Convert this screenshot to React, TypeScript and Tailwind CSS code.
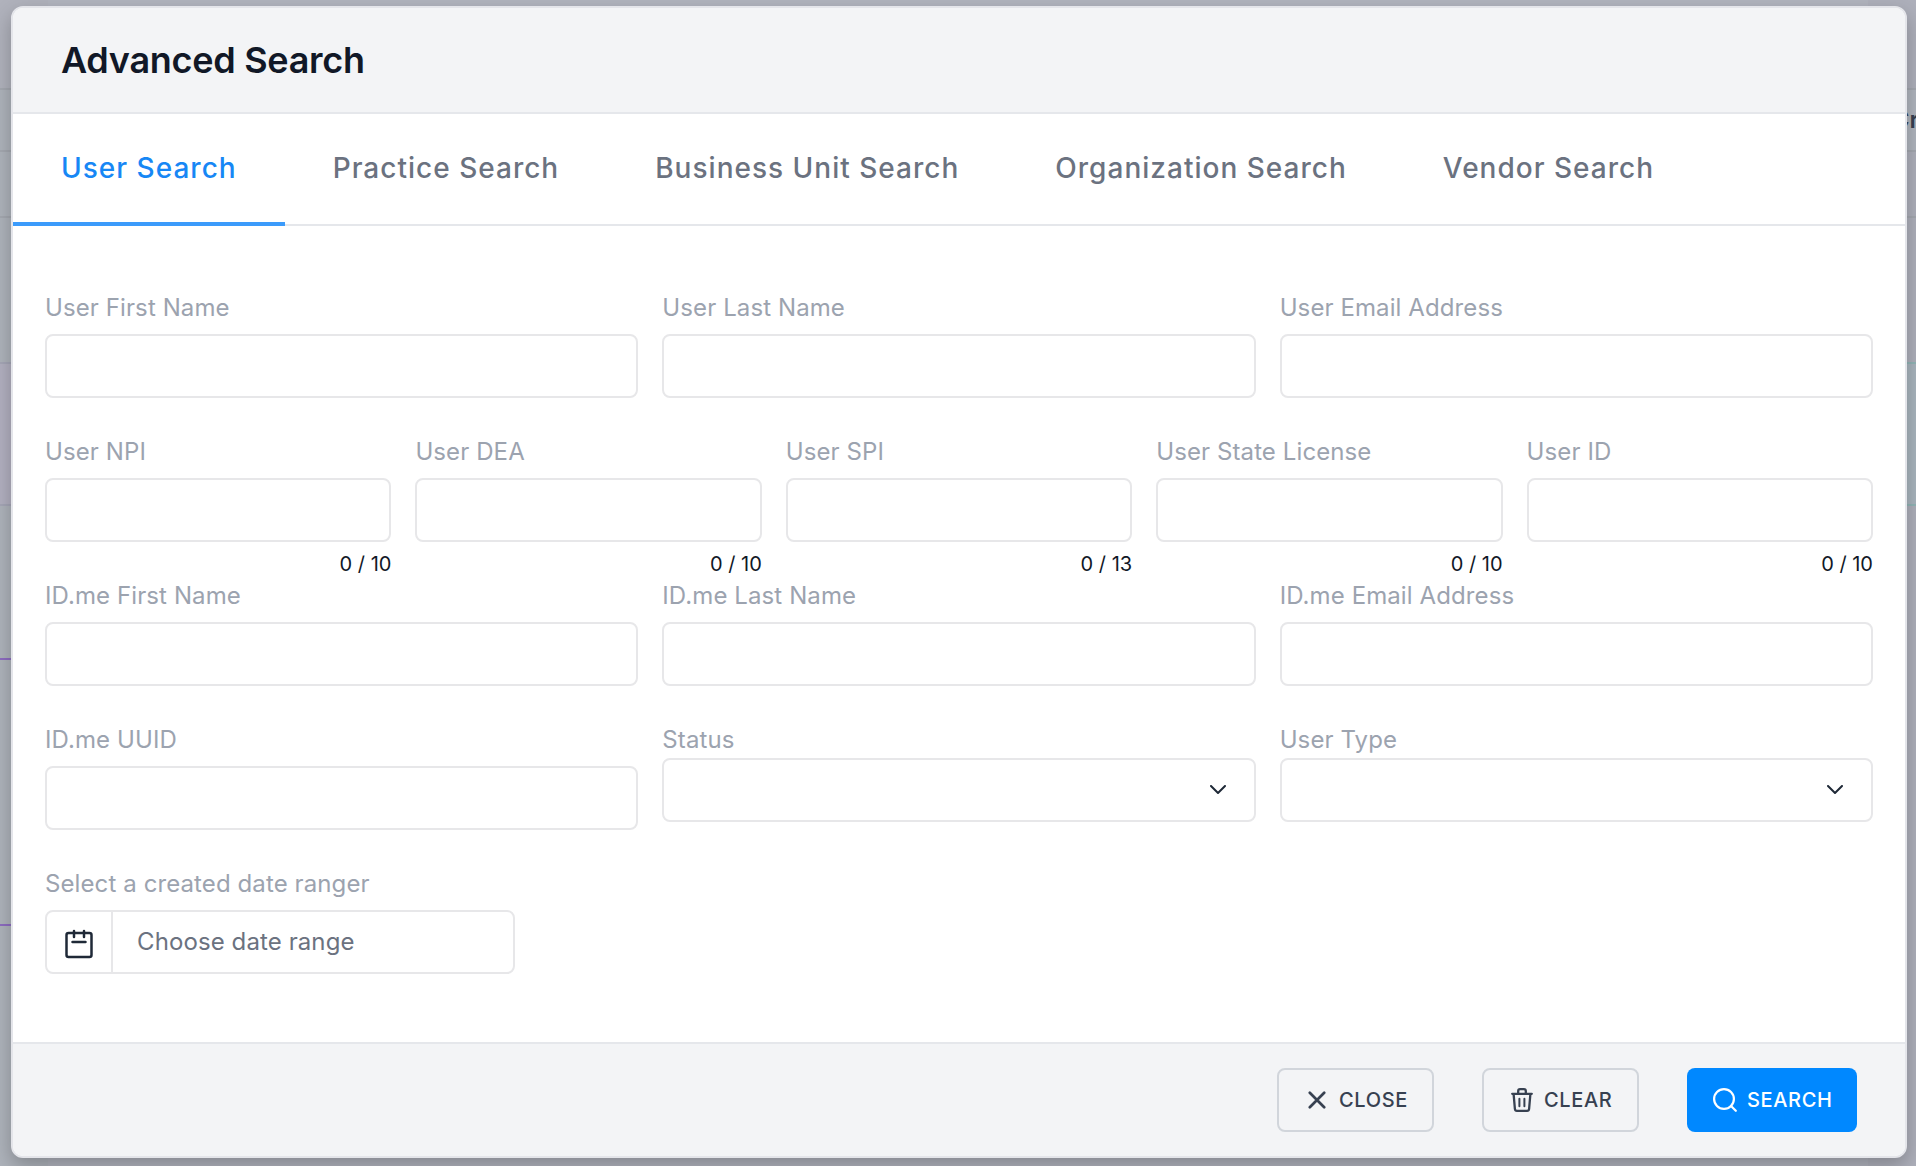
import React, { useState } from 'react';

const tabs = [
  'User Search',
  'Practice Search',
  'Business Unit Search',
  'Organization Search',
  'Vendor Search',
];

const box = 'h-16 w-full rounded-lg border-2 border-[#e7e7e9] bg-white';

interface FieldProps {
  label: string;
  max?: number;
}

function Field({ label, max }: FieldProps) {
  const [value, setValue] = useState('');

  return (
    <label className="flex h-36 flex-col">
      <span className="h-[42px] text-[24px] leading-8 tracking-[0.1px] text-[#9ca3af]">{label}</span>
      <input
        className={`${box} px-6 outline-none`}
        value={value}
        maxLength={max}
        onChange={(e) => setValue(e.target.value)}
      />
      {max && (
        <span className="mt-2 text-right text-[20px] leading-7 text-[#111827]">
          {value.length} / {max}
        </span>
      )}
    </label>
  );
}

function SelectField({ label }: FieldProps) {
  return (
    <div className="flex h-36 flex-col">
      <span className="h-[34px] text-[24px] leading-8 tracking-[0.1px] text-[#9ca3af]">{label}</span>
      <button className={`${box} flex items-center justify-end pr-7`}>
        <svg width="16" height="10" viewBox="0 0 16 10" fill="none" stroke="#1f2937" strokeWidth="2">
          <path d="M1 1l7 7 7-7" strokeLinecap="round" strokeLinejoin="round" />
        </svg>
      </button>
    </div>
  );
}

function CalendarIcon() {
  return (
    <svg width="28" height="30" viewBox="0 0 28 30" fill="none" stroke="#1f2937" strokeWidth="2.5" strokeLinecap="round">
      <rect x="1.5" y="4" width="25" height="24" rx="2" />
      <path d="M9 2v6M19 2v6M7.5 13h13" />
    </svg>
  );
}

function CloseIcon() {
  return (
    <svg width="18" height="18" viewBox="0 0 18 18" fill="none" stroke="currentColor" strokeWidth="2.7" strokeLinecap="round">
      <path d="M1.8 1.8l14.4 14.4M16.2 1.8L1.8 16.2" />
    </svg>
  );
}

function TrashIcon() {
  return (
    <svg width="22" height="24" viewBox="0 0 22 24" fill="none" stroke="currentColor" strokeWidth="2.3" strokeLinecap="round" strokeLinejoin="round">
      <path d="M1.2 5.8h19.6M7.2 5.8V3a1.8 1.8 0 0 1 1.8-1.8h4A1.8 1.8 0 0 1 14.8 3v2.8M2.6 5.8l1.3 15.2a2 2 0 0 0 2 1.8h10.2a2 2 0 0 0 2-1.8l1.3-15.2" />
      <path d="M8.4 10.8v7.4M13.4 10.8v7.4" strokeWidth="2" />
    </svg>
  );
}

function SearchIcon() {
  return (
    <svg width="24" height="24" viewBox="0 0 24 24" fill="none" stroke="currentColor" strokeWidth="2.2" strokeLinecap="round">
      <circle cx="11" cy="11" r="9.9" />
      <path d="M18 18l4.8 4.8" />
    </svg>
  );
}

// Slice of the dimmed page that is still visible beside the dialog
function Backdrop() {
  return (
    <div className="absolute inset-0 flex justify-between bg-[#b1b4be]">
      <div className="w-12 bg-[#aeb3bb]">
        <div className="h-[90px] border-b-2 border-[#a4a8b0] bg-[#b0b2bc]" />
        <div className="h-[62px] border-b-2 border-[#a4a8b0]" />
        <div className="h-[66px] border-b-2 border-[#a4a8b0]" />
        <div className="h-[146px] border-b-2 border-[#a5a6b6]" />
        <div className="h-[142px] border-b-2 border-[#a5a6b6] bg-[#b2b0c0]" />
        <div className="h-[154px] border-b-2 border-[#8d6cc0]" />
        <div className="h-[266px] border-b-2 border-[#8d6cc0]" />
      </div>
      <div className="w-12 bg-[#aeb0bb]">
        <div className="h-[90px] border-b-2 border-[#a4a8b0]" />
        <div className="flex h-[62px] items-center justify-end overflow-hidden border-b-2 border-[#a4a8b0] bg-[#b0b5be]">
          <span className="-mr-[3px] text-[24px] font-semibold text-[#374151]">Cr</span>
        </div>
        <div className="h-[66px] border-b-2 border-[#a4a8b0]" />
        <div className="h-[146px] border-b-2 border-[#92b5b6]" />
        <div className="h-[142px] border-b-2 border-[#92b5b6] bg-[#a9b5be]" />
      </div>
    </div>
  );
}

export default function App() {
  const [activeTab, setActiveTab] = useState(0);

  const outlined =
    'flex h-16 w-[157px] items-center rounded-lg border-2 border-[#d1d5db] text-[20px] font-medium tracking-[0.65px] text-[#374151]';

  return (
    <div className="relative h-[1166px] w-[1916px] overflow-hidden font-['Inter',sans-serif]">
      <Backdrop />

      <div className="relative pt-1.5 pr-[9px] pl-[11px]">
        <div className="flex h-[1152px] flex-col overflow-hidden rounded-xl border-2 border-[#e4e5ea] bg-white shadow-[0_8px_20px_rgba(0,0,0,0.25)]">
          <header className="flex h-[106px] shrink-0 items-center border-b-2 border-[#e5e7eb] bg-[#f3f4f6] px-12">
            <h1 className="text-[36px] font-semibold tracking-[-0.28px] text-[#111827]">Advanced Search</h1>
          </header>

          <nav className="flex h-28 shrink-0 border-b-2 border-[#e5e7eb]">
            {tabs.map((tab, i) => (
              <button
                key={tab}
                onClick={() => setActiveTab(i)}
                className={`-mb-0.5 h-28 border-b-4 px-12 text-[28px] font-medium tracking-[1.01px] ${
                  i === activeTab ? 'border-[#3b9bfb] text-[#1787f5]' : 'border-transparent text-[#6b7280]'
                }`}
              >
                {tab}
              </button>
            ))}
          </nav>

          <main className="flex-1 px-8 pt-[66px]">
            <div className="grid grid-cols-3 gap-x-6">
              <Field label="User First Name" />
              <Field label="User Last Name" />
              <Field label="User Email Address" />
            </div>
            <div className="grid grid-cols-5 gap-x-6">
              <Field label="User NPI" max={10} />
              <Field label="User DEA" max={10} />
              <Field label="User SPI" max={13} />
              <Field label="User State License" max={10} />
              <Field label="User ID" max={10} />
            </div>
            <div className="grid grid-cols-3 gap-x-6">
              <Field label="ID.me First Name" />
              <Field label="ID.me Last Name" />
              <Field label="ID.me Email Address" />
              <Field label="ID.me UUID" />
              <SelectField label="Status" />
              <SelectField label="User Type" />
            </div>
            <div className="h-[42px] text-[24px] leading-8 tracking-[0.1px] text-[#9ca3af]">
              Select a created date ranger
            </div>
            <button className="flex h-16 w-[470px] overflow-hidden rounded-lg border-2 border-[#e7e7e9] text-left">
              <span className="flex h-full w-[66px] items-center justify-center border-r-2 border-[#e7e7e9] pt-1">
                <CalendarIcon />
              </span>
              <span className="pl-6 text-[24px] leading-[60px] tracking-[0.1px] text-[#6b7280]">
                Choose date range
              </span>
            </button>
          </main>

          <footer className="flex h-[114px] shrink-0 items-center justify-end gap-12 border-t-2 border-[#e5e7eb] bg-[#f3f4f6] px-12">
            <button className={`${outlined} gap-[13px] pl-[29px]`}>
              <CloseIcon />
              CLOSE
            </button>
            <button className={`${outlined} gap-[11px] pl-[27px]`}>
              <TrashIcon />
              CLEAR
            </button>
            <button className="flex h-16 w-[170px] items-center gap-2.5 rounded-lg bg-[#0088ff] pl-[26px] text-[20px] font-medium tracking-[0.65px] text-white">
              <SearchIcon />
              SEARCH
            </button>
          </footer>
        </div>
      </div>
    </div>
  );
}
